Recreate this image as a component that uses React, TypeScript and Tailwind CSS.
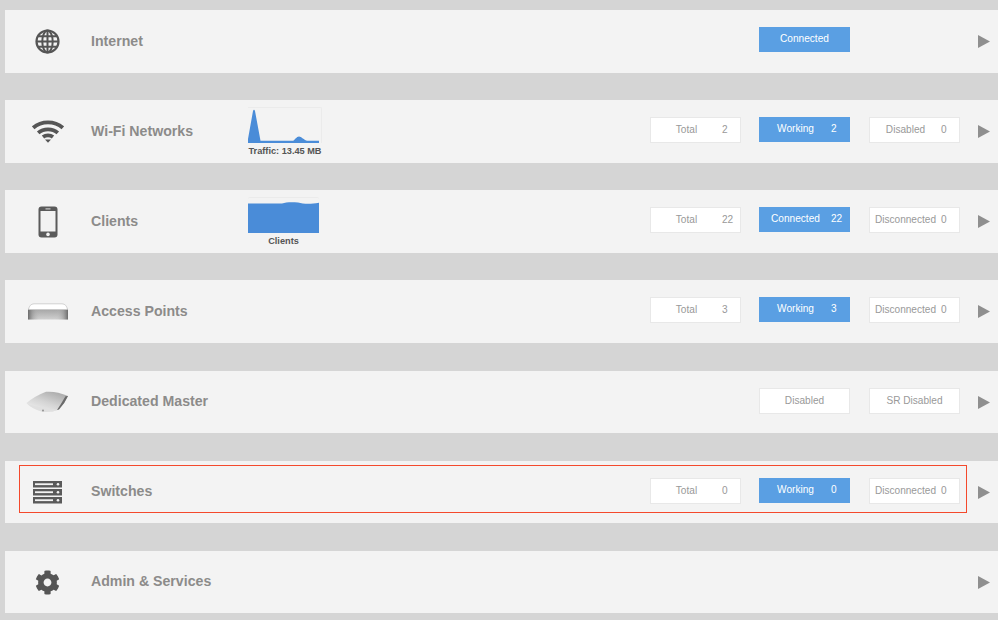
import React from "react";
import { FaCog } from "react-icons/fa";

const Globe = () => (
  <svg width="25" height="25" viewBox="0 0 25 25" fill="none" stroke="#555" strokeWidth="2">
    <circle cx="12.5" cy="12.5" r="11" strokeWidth="2.200" />
    <ellipse cx="12.5" cy="12.5" rx="5.200" ry="11" />
    <path d="M12.500 1.500v22M1.500 12.500h22M3.200 7.200h18.600M3.200 17.800h18.600" />
  </svg>
);

const Wifi = () => (
  <svg width="32" height="23" viewBox="0 0 32 23" fill="none" stroke="#555" strokeWidth="3.800">
    <path d="M1.200 7.800C9.500 .6 22.500 .6 30.800 7.800" />
    <path d="M6.200 12.900C11.600 8.100 20.400 8.100 25.800 12.900" />
    <path d="M11 17C13.800 14.800 18.200 14.800 21 17" />
    <path d="M13 19.400h6l-3 3.400z" fill="#555" stroke="none" />
  </svg>
);

const Phone = () => (
  <svg width="20" height="32" viewBox="0 0 20 32">
    <rect x="0.5" y="0.5" width="19" height="31" rx="3" fill="#5a5a5a" />
    <rect x="2.500" y="5" width="15" height="20.500" fill="#f2f2f2" />
    <rect x="7.500" y="2.400" width="5" height="1" fill="#ddd" />
    <circle cx="10" cy="28.400" r="1.800" fill="#f2f2f2" />
  </svg>
);

const MacMini = () => (
  <svg width="42" height="18" viewBox="0 0 42 18">
    <defs>
      <linearGradient id="macBody" x1="0" y1="0" x2="0" y2="1">
        <stop offset="0" stopColor="#a0a0a0" />
        <stop offset="1" stopColor="#d0d0d0" />
      </linearGradient>
      <linearGradient id="macSide" x1="0" y1="0" x2="1" y2="0">
        <stop offset="0" stopColor="#6a6a6a" />
        <stop offset="0.12" stopColor="#8f8f8f" stopOpacity="0.5" />
        <stop offset="0.3" stopColor="#c4c4c4" stopOpacity="0" />
        <stop offset="0.7" stopColor="#c4c4c4" stopOpacity="0" />
        <stop offset="0.88" stopColor="#8f8f8f" stopOpacity="0.5" />
        <stop offset="1" stopColor="#6a6a6a" />
      </linearGradient>
    </defs>
    <path d="M1 7Q1 5.500 3 5H39Q41 5.500 41 7V16.500H1Z" fill="url(#macBody)" />
    <path d="M1 6H41V16.500H1Z" fill="url(#macSide)" />
    <path d="M1.500 6.500Q2.500 1 7 .8H35Q39.500 1 40.500 6.500Z" fill="#ffffff" stroke="#c8c8c8" strokeWidth=".8" />
  </svg>
);

const ApDevice = () => (
  <svg width="43" height="22" viewBox="0 0 43 22">
    <defs>
      <linearGradient id="apTop" x1="0.9" y1="0" x2="0.2" y2="1">
        <stop offset="0" stopColor="#a4a4a4" />
        <stop offset="0.55" stopColor="#d4d4d4" />
        <stop offset="1" stopColor="#f0f0f0" />
      </linearGradient>
    </defs>
    <path d="M.5 12Q9 5 20 .8Q30 -.2 42 5Q39 12 33 18.500Q26 21.500 17 21Q6 18 .5 12Z" fill="url(#apTop)" />
    <path d="M.5 12Q6 18 17 21Q26 21.500 32 19Q22 17.500 14 16Q5 14.500 .5 12Z" fill="#e0e0e0" />
    <path d="M42 5Q39 12 33 18.500Q32 18.800 31 19Q35 13 39.500 5.200Z" fill="#6a6a6a" />
    <circle cx="17" cy="19.500" r=".9" fill="#8a8a8a" />
  </svg>
);

const Server = () => (
  <svg width="29" height="23" viewBox="0 0 29 23">
    {[0, 8, 16].map((y) => (
      <g key={y}>
        <rect x="0" y={y} width="29" height="6.500" fill="#5a5a5a" />
        <rect x="2" y={y + 2.300} width="18" height="1.800" fill="#f2f2f2" />
        <circle cx="25" cy={y + 3.200} r="1.300" fill="#f2f2f2" />
      </g>
    ))}
  </svg>
);

const Arrow = () => (
  <svg width="12" height="13" viewBox="0 0 12 13" className="shrink-0">
    <polygon points="0,0 12,6.500 0,13" fill="#8f8f8f" />
  </svg>
);

const TrafficChart = () => (
  <div className="flex w-[74px] flex-col items-center self-start pt-[7px]">
    <div className="h-[36px] w-full rounded-tr-[2px] border-t border-r border-[#ebebeb]">
      <svg width="73" height="35" viewBox="0 0 73 35" className="block">
        <path d="M0 35V31L5 3Q6 .5 7 3L12.500 32.800H45C47 32 48.500 28.500 51 28.500C53.500 28.500 55 31.500 59 32.800H71V35Z" fill="#4a8cd8" />
      </svg>
    </div>
    <span className="mt-[2px] text-[9.200px] leading-[12px] font-bold whitespace-nowrap text-[#555]">Traffic: 13.45 MB</span>
  </div>
);

const ClientsChart = () => (
  <div className="flex w-[74px] flex-col self-start pt-[7px]">
    <div className="h-[36px] w-[71px] rounded-t-[2px] border-t border-[#ebebeb]">
      <svg width="71" height="35" viewBox="0 0 71 35" className="block">
        <path d="M0 5.500H34C38 4 44 4 50 4.500C55 5.500 60 6.800 71 4.800V35H0Z" fill="#4a8cd8" />
      </svg>
    </div>
    <span className="mt-[2px] w-[71px] text-center text-[9.200px] leading-[12px] font-bold text-[#555]">Clients</span>
  </div>
);

type P = { label: string; count?: string; active?: boolean };

const Pill = ({ label, count, active }: P) => (
  <div
    className={
      "flex w-[91px] items-center border text-[10.100px] leading-none " +
      (active
        ? "h-[25px] border-[#5a9fe3] bg-[#5a9fe3] text-white"
        : "h-[26px] border-[#e8e8e8] bg-white text-[#999]") +
      (count === undefined ? " justify-center" : "")
    }
  >
    {count === undefined ? (
      <span>{label}</span>
    ) : (
      <>
        <span className="w-[71px] text-center whitespace-nowrap">{label}</span>
        <span>{count}</span>
      </>
    )}
  </div>
);

type RowData = {
  icon: React.ReactNode;
  title: string;
  chart?: React.ReactNode;
  pills: (P | null)[];
  selected?: boolean;
  mt: string;
  h: string;
};

const rows: RowData[] = [
  { icon: <Globe />, title: "Internet", mt: "mt-[10px]", h: "h-[63px]", pills: [null, { label: "Connected", active: true }, null] },
  { icon: <Wifi />, title: "Wi-Fi Networks", chart: <TrafficChart />, mt: "mt-[27px]", h: "h-[63px]", pills: [{ label: "Total", count: "2" }, { label: "Working", count: "2", active: true }, { label: "Disabled", count: "0" }] },
  { icon: <Phone />, title: "Clients", chart: <ClientsChart />, mt: "mt-[27px]", h: "h-[63px]", pills: [{ label: "Total", count: "22" }, { label: "Connected", count: "22", active: true }, { label: "Disconnected", count: "0" }] },
  { icon: <MacMini />, title: "Access Points", mt: "mt-[27px]", h: "h-[63px]", pills: [{ label: "Total", count: "3" }, { label: "Working", count: "3", active: true }, { label: "Disconnected", count: "0" }] },
  { icon: <ApDevice />, title: "Dedicated Master", mt: "mt-[28px]", h: "h-[62px]", pills: [null, { label: "Disabled" }, { label: "SR Disabled" }] },
  { icon: <Server />, title: "Switches", selected: true, mt: "mt-[28px]", h: "h-[62px]", pills: [{ label: "Total", count: "0" }, { label: "Working", count: "0", active: true }, { label: "Disconnected", count: "0" }] },
  { icon: <FaCog size={25} color="#555" />, title: "Admin & Services", mt: "mt-[28px]", h: "h-[62px]", pills: [null, null, null] },
];

export default function App() {
  return (
    <div className="flex h-[620px] w-[998px] flex-col overflow-hidden bg-[#d5d5d5] pl-[5px] font-['Liberation_Sans',Arial,sans-serif]">
      {rows.map((r) => (
        <div key={r.title} className={"relative flex shrink-0 items-center bg-[#f3f3f3] " + r.mt + " " + r.h}>
          <div className="flex w-[85px] shrink-0 items-center justify-center">{r.icon}</div>
          <div className="ml-px w-[157px] shrink-0 text-[14.150px] font-bold whitespace-nowrap text-[#8c8b8a]">{r.title}</div>
          {r.chart}
          <div className="ml-auto flex h-full items-start pt-[17px]">
            <div className="flex gap-[18px]">
              {r.pills.map((p, i) => (
                <div key={i} className={i === 1 ? "mr-px w-[91px]" : "w-[91px]"}>
                  {p && <Pill {...p} />}
                </div>
              ))}
            </div>
          </div>
          <div className="mr-[8px] ml-[18px] flex h-full items-center">
            <Arrow />
          </div>
          {r.selected && (
            <div className="pointer-events-none absolute top-[4px] left-[14px] h-[48px] w-[948px] border border-[#f4492c]" />
          )}
        </div>
      ))}
    </div>
  );
}
